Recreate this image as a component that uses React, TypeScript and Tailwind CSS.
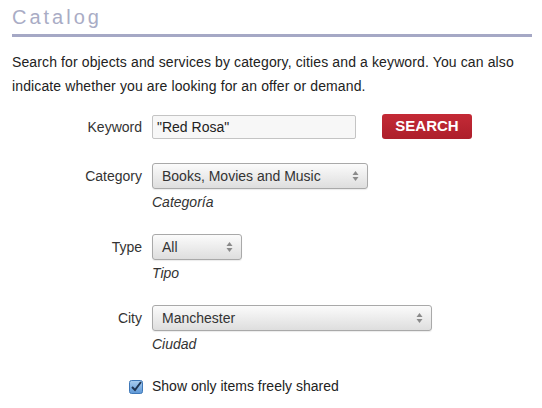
import type { ReactNode } from "react";

const Arrows = () => (
  <svg width="7" height="12" viewBox="0 0 7 12" className="absolute right-[8px] top-1/2 -translate-y-1/2">
    <path d="M3.5 1 L6.5 5 L0.5 5 Z" fill="#8a8a8a" />
    <path d="M3.5 11 L6.5 7 L0.5 7 Z" fill="#8a8a8a" />
  </svg>
);

const Select = ({ value, width }: { value: string; width: string }) => (
  <div
    className={`relative h-[26px] ${width} rounded-[3px] border border-[#a9a9a9] bg-gradient-to-b from-[#fbfbfb] to-[#dedede] pl-[9px] flex items-center text-[14px] text-[#333] shadow-[0_1px_1px_rgba(0,0,0,0.08)]`}
  >
    {value}
    <Arrows />
  </div>
);

const Field = ({
  label,
  help,
  children,
  className = "",
}: {
  label: string;
  help?: string;
  children: ReactNode;
  className?: string;
}) => (
  <div className={className}>
    <div className="flex items-center gap-[10px]">
      <div className="w-[130px] text-right text-[14px] text-[#333]">{label}</div>
      {children}
    </div>
    {help && (
      <div className="pl-[140px] mt-[4px] h-[18px] leading-[18px] italic text-[14px] text-[#333]">
        {help}
      </div>
    )}
  </div>
);

export default function App() {
  return (
    <main className="font-[Liberation_Sans,Arial,sans-serif] w-[542px] h-[408px] bg-white overflow-hidden pl-[12px] pr-[10px]">
      <h1 className="pt-[4px] h-[34px] leading-[26px] text-[20px] tracking-[3px] text-[#a9acc5]">
        Catalog
      </h1>
      <div className="h-[3px] bg-[#a5a8c5]"></div>
      <p className="mt-[13px] text-[14px] leading-[24px] tracking-[0.12px] text-[#222]">
        Search for objects and services by category, cities and a keyword. You can also indicate
        whether you are looking for an offer or demand.
      </p>

      <Field label="Keyword" className="mt-[17px]">
        <div className="h-[24px] w-[204px] rounded-[2px] border border-[#c4c4c4] bg-[#f7f7f7] pl-[4px] flex items-center text-[14px] text-[#222]">
          "Red Rosa"
        </div>
        <button className="ml-[16px] -mt-[1px] h-[25px] w-[90px] rounded-[3px] bg-gradient-to-b from-[#c42a36] to-[#ad1f2b] text-white font-bold text-[15px]">
          SEARCH
        </button>
      </Field>

      <Field label="Category" help="Categoría" className="mt-[24px]">
        <Select value="Books, Movies and Music" width="w-[216px]" />
      </Field>

      <Field label="Type" help="Tipo" className="mt-[23px]">
        <Select value="All" width="w-[90px]" />
      </Field>

      <Field label="City" help="Ciudad" className="mt-[23px]">
        <Select value="Manchester" width="w-[280px]" />
      </Field>

      <div className="mt-[23px] flex items-center gap-[9px] pl-[117px]">
        <svg width="14" height="14" viewBox="0 0 14 14">
          <defs>
            <linearGradient id="cb" x1="0" y1="0" x2="0" y2="1">
              <stop offset="0" stopColor="#a9cdf0" />
              <stop offset="1" stopColor="#5d97d6" />
            </linearGradient>
          </defs>
          <rect x="0.5" y="0.5" width="13" height="13" rx="2" fill="url(#cb)" stroke="#3f78b8" />
          <path d="M3 7 L6 10 L12 2" fill="none" stroke="#1f3553" strokeWidth="2" />
        </svg>
        <span className="text-[14px] text-[#222]">Show only items freely shared</span>
      </div>
    </main>
  );
}
